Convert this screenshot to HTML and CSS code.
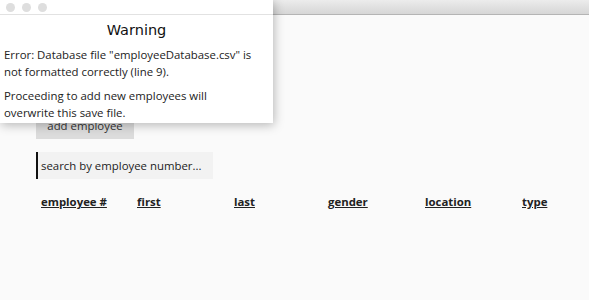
FILE: index.html
```html
<!DOCTYPE html>
<html>
<head>
<meta charset="utf-8">
<link rel="stylesheet" href="styles.css">
</head>
<body>
<div class="window">
  <div class="titlebar"></div>
  <div class="content">
    <div class="add-btn">add employee</div>
    <div class="search">search by employee number...</div>
    <div class="header-row">
      <span class="col">employee #</span>
      <span class="col">first</span>
      <span class="col">last</span>
      <span class="col">gender</span>
      <span class="col">location</span>
      <span class="col">type</span>
    </div>
  </div>
</div>
<div class="dialog">
  <div class="dialog-bar">
    <span class="dot"></span><span class="dot"></span><span class="dot"></span>
  </div>
  <div class="dialog-title">Warning</div>
  <div class="dialog-body">
    <p>Error: Database file "employeeDatabase.csv" is not formatted correctly (line 9).</p>
    <p>Proceeding to add new employees will overwrite this save file.</p>
  </div>
</div>
</body>
</html>
```
FILE: styles.css
```css
html, body {
  margin: 0;
  padding: 0;
  background: #fafafa;
  font-family: "Open Sans", "Noto Sans", sans-serif;
  color: #222;
}
.window {
  width: 589px;
  height: 300px;
  overflow: hidden;
}
.titlebar {
  height: 14px;
  background: linear-gradient(#ececec, #d6d6d6);
  border-bottom: 1px solid #b4b4b4;
}
.content {
  padding-left: 36px;
  padding-top: 98px;
}
.add-btn {
  width: 98px;
  height: 26px;
  background: #dcdcdc;
  font-size: 11.4px;
  line-height: 26px;
  text-align: center;
  color: #333;
}
.search {
  margin-top: 13px;
  width: 172px;
  height: 27px;
  background: #f2f2f2;
  border-left: 2px solid #111;
  padding-left: 3px;
  font-size: 11.4px;
  line-height: 27px;
  color: #222;
}
.header-row {
  margin-top: 15px;
  padding-left: 5px;
  display: grid;
  grid-template-columns: 96px 97px 94px 97px 97px 97px;
  font-size: 11.4px;
  font-weight: 700;
  line-height: 16px;
  color: #222;
}
.col {
  text-decoration: underline;
}
.dialog {
  position: absolute;
  top: 0;
  left: 0;
  width: 273px;
  height: 123px;
  background: #fff;
  box-shadow: 1px 2px 10px rgba(0,0,0,0.28);
}
.dialog-bar {
  height: 14px;
  border-bottom: 1px solid #e2e2e2;
  display: flex;
  align-items: center;
  gap: 7px;
  padding-left: 6px;
}
.dot {
  width: 9px;
  height: 9px;
  border-radius: 50%;
  background: #dedede;
}
.dialog-title {
  font-family: "DejaVu Sans", sans-serif;
  font-size: 14.5px;
  text-align: center;
  color: #111;
  margin-top: 6px;
  line-height: 18px;
}
.dialog-body {
  padding: 0 20px 0 4px;
  font-size: 11.4px;
  line-height: 16.5px;
  color: #222;
  margin-top: 8px;
}
.dialog-body p {
  margin: 0 0 8px 0;
}
```
